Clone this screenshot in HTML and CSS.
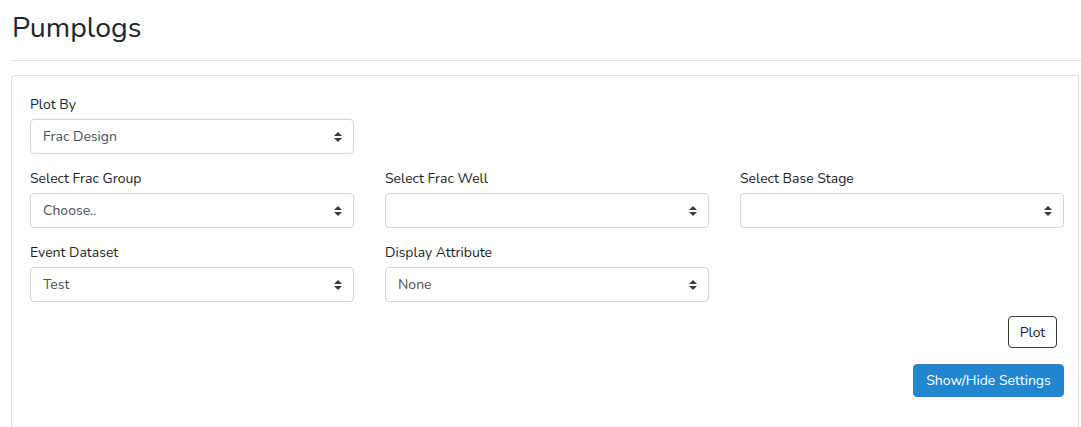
FILE: index.html
```html
<!DOCTYPE html>
<html>
<head>
<meta charset="utf-8">
<link rel="stylesheet" href="styles.css">
</head>
<body>
<div class="page">
  <h1 class="title">Pumplogs</h1>
  <hr class="rule">
  <div class="card">
    <div class="row">
      <div class="field">
        <label class="label">Plot By</label>
        <div class="select"><span class="value">Frac Design</span></div>
      </div>
    </div>
    <div class="row">
      <div class="field">
        <label class="label">Select Frac Group</label>
        <div class="select"><span class="value">Choose..</span></div>
      </div>
      <div class="field">
        <label class="label">Select Frac Well</label>
        <div class="select"><span class="value"></span></div>
      </div>
      <div class="field">
        <label class="label">Select Base Stage</label>
        <div class="select"><span class="value"></span></div>
      </div>
    </div>
    <div class="row">
      <div class="field">
        <label class="label">Event Dataset</label>
        <div class="select"><span class="value">Test</span></div>
      </div>
      <div class="field">
        <label class="label">Display Attribute</label>
        <div class="select"><span class="value">None</span></div>
      </div>
    </div>
    <div class="actions">
      <button class="btn-plot">Plot</button>
      <button class="btn-settings">Show/Hide Settings</button>
    </div>
  </div>
</div>
</body>
</html>
```

FILE: styles.css
```css
html, body {
  margin: 0;
  padding: 0;
  overflow: hidden;
  background: #fff;
}
body {
  font-family: "Nunito", "Lato", "Open Sans", sans-serif;
  color: #212529;
  font-size: 14px;
}
.page {
  padding: 0 0 0 11px;
}
.title {
  margin: 0;
  padding: 11px 0 0 1px;
  font-size: 28.5px;
  font-weight: 400;
  line-height: 34px;
  color: #212529;
}
.rule {
  margin: 15px 0 0 0;
  border: 0;
  border-top: 1px solid #e3e3e3;
  height: 0;
}
.card {
  margin-top: 14px;
  border: 1px solid #dedede;
  border-bottom: 0;
  border-radius: 4px 0 0 0;
  width: 1068px;
  height: 352px;
  padding: 18px 0 0 18px;
  box-sizing: border-box;
}
.row {
  display: flex;
  gap: 31px;
  margin-bottom: 14px;
}
.field {
  width: 324px;
  display: flex;
  flex-direction: column;
}
.label {
  line-height: 21px;
  margin-bottom: 4px;
  color: #212529;
}
.select {
  position: relative;
  height: 35px;
  box-sizing: border-box;
  border: 1px solid #ced4da;
  border-radius: 4px;
  display: flex;
  align-items: center;
  padding: 0 12px;
  color: #495057;
}
.select::before,
.select::after {
  content: "";
  position: absolute;
  right: 11px;
  width: 0;
  height: 0;
  border-left: 4px solid transparent;
  border-right: 4px solid transparent;
}
.select::before {
  top: 12px;
  border-bottom: 4px solid #343a40;
}
.select::after {
  top: 18px;
  border-top: 4px solid #343a40;
}
.actions {
  display: flex;
  flex-direction: column;
  align-items: flex-end;
  gap: 16px;
  padding-right: 14px;
  margin-top: 1px;
}
.btn-plot {
  font-family: inherit;
  font-size: 14px;
  color: #212529;
  background: #fff;
  border: 1px solid #343a40;
  border-radius: 4px;
  height: 32px;
  width: 49px;
  padding: 0;
  margin-right: 7px;
}
.btn-settings {
  font-family: inherit;
  font-size: 14px;
  color: #fff;
  background: #2185d0;
  border: 1px solid #2185d0;
  border-radius: 4px;
  height: 33px;
  width: 151px;
  padding: 0;
}
```
